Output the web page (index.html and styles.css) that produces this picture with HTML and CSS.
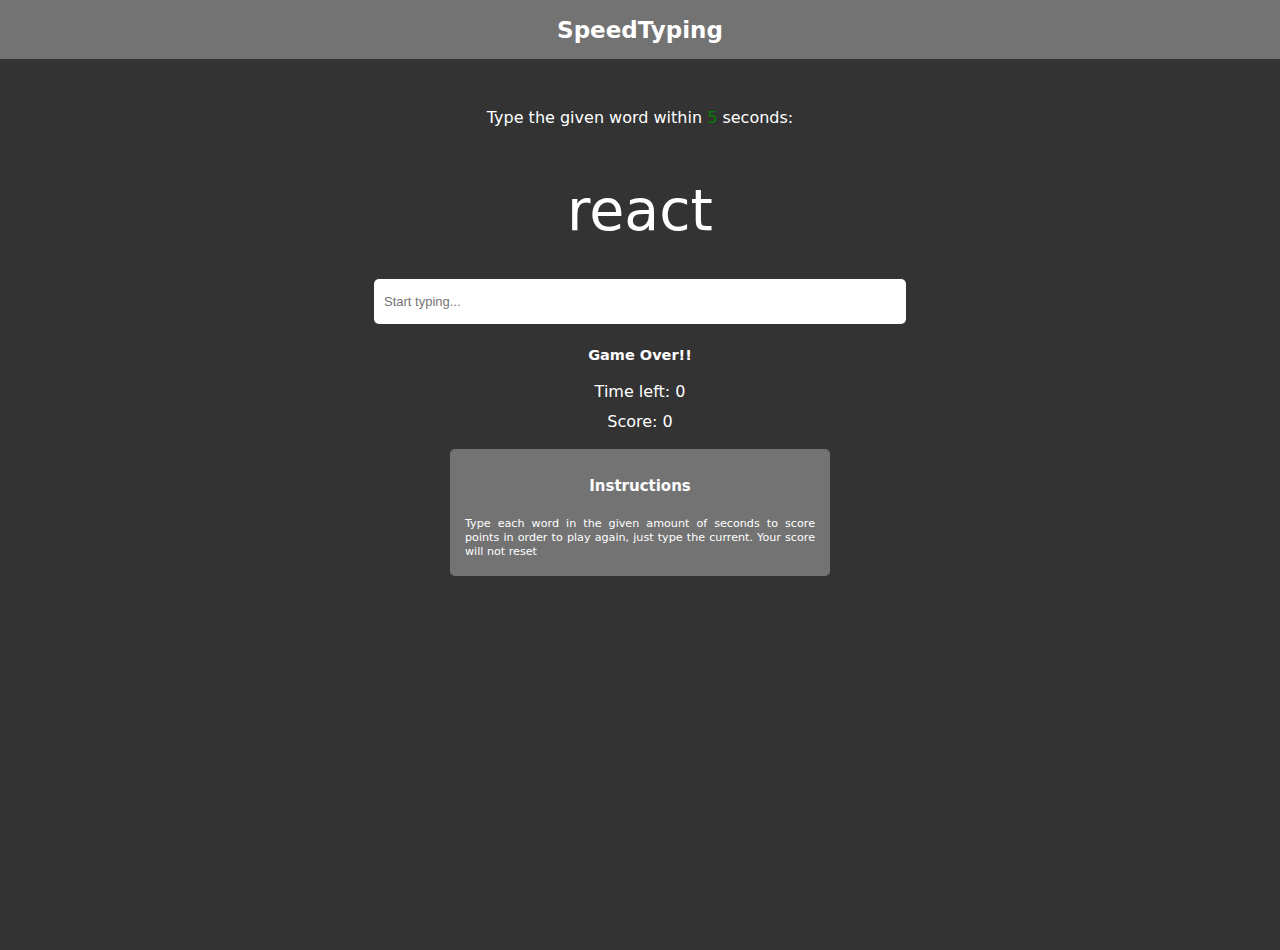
FILE: index.html
```html
<!DOCTYPE html>
<html lang="en">
<head>
<meta charset="utf-8">
<title>SpeedTyping</title>
<link rel="stylesheet" href="styles.css">
</head>
<body>
<header class="header">
  <h1 class="brand">SpeedTyping</h1>
</header>
<main class="main">
  <p class="lead">Type the given word within <span class="secs">5</span> seconds:</p>
  <p class="word">react</p>
  <input class="entry" type="text" placeholder="Start typing...">
  <p class="over">Game Over!!</p>
  <p class="stat">Time left: 0</p>
  <p class="stat">Score: 0</p>
  <section class="card">
    <h3 class="card-title">Instructions</h3>
    <p class="card-text">Type each word in the given amount of seconds to score points in order to play again, just type the current. Your score will not reset</p>
  </section>
</main>
</body>
</html>
```
FILE: styles.css
```css
* { box-sizing: border-box; }
html, body { margin: 0; padding: 0; }
body {
  background: #333333;
  color: #ffffff;
  font-family: "DejaVu Sans", sans-serif;
  min-height: 950px;
}
.header {
  background: #737373;
  height: 59px;
  display: flex;
  align-items: center;
  justify-content: center;
}
.brand {
  margin: 0;
  font-size: 23px;
  font-weight: bold;
}
.main {
  display: flex;
  flex-direction: column;
  align-items: center;
}
.lead {
  margin: 48px 0 0;
  font-size: 16px;
  line-height: 22px;
}
.secs { color: #008000; }
.word {
  margin: 46px 0 0;
  font-size: 57px;
  line-height: 70px;
}
.entry {
  margin-top: 34px;
  width: 532px;
  height: 45px;
  border: none;
  border-radius: 5px;
  padding: 0 10px;
  font-family: "Liberation Sans", Arial, sans-serif;
  font-size: 13px;
  color: #333;
  background: #fff;
  outline: none;
}
.entry::placeholder { color: #757575; }
.over {
  margin: 21px 0 0;
  font-size: 14.5px;
  font-weight: bold;
  line-height: 20px;
}
.stat {
  margin: 16px 0 0;
  font-size: 16px;
  line-height: 22px;
}
.stat + .stat { margin-top: 8px; }
.card {
  margin-top: 16px;
  width: 380px;
  background: #737373;
  border-radius: 5px;
  padding: 26px 15px 17px;
}
.card-title {
  margin: 0;
  text-align: center;
  font-size: 15px;
  font-weight: bold;
  line-height: 22px;
}
.card-text {
  margin: 20px 0 0;
  font-size: 11.15px;
  line-height: 14px;
  text-align: justify;
}
```
